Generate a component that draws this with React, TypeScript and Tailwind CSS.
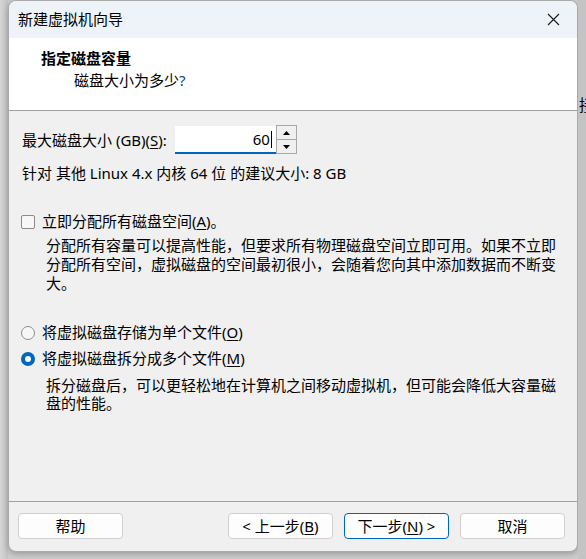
import React from "react";

const font = { fontFamily: '"Noto Sans", "Noto Sans CJK SC", sans-serif' };

function U({ children }: { children: React.ReactNode }) {
  return <span className="underline underline-offset-2 decoration-1">{children}</span>;
}

function Radio({ checked }: { checked?: boolean }) {
  if (checked) {
    return (
      <span className="w-[14px] h-[14px] rounded-full bg-[#0067c0] flex items-center justify-center shrink-0">
        <span className="w-[6px] h-[6px] rounded-full bg-white" />
      </span>
    );
  }
  return <span className="w-[14px] h-[14px] rounded-full border border-[#8c8c8c] bg-[#f7f7f7] shrink-0" />;
}

function Btn({ children, primary }: { children: React.ReactNode; primary?: boolean }) {
  return (
    <button
      className={
        primary
          ? "w-[105px] h-[26px] rounded-[4px] bg-[#fdfdfd] border border-[#0067c0] text-[15px] leading-none text-black flex items-center justify-center"
          : "w-[105px] h-[26px] rounded-[4px] bg-[#fdfdfd] border border-[#d0d0d0] text-[15px] leading-none text-black flex items-center justify-center"
      }
    >
      {children}
    </button>
  );
}

export default function App() {
  return (
    <div className="w-[586px] h-[559px] bg-[#cdcdcd] flex overflow-hidden text-black" style={font}>
      {/* left backdrop */}
      <div className="w-[8px] h-full bg-[linear-gradient(90deg,#d6d6d6,#c4c4c4)]" />

      {/* dialog */}
      <div className="w-[570px] h-[552px] flex flex-col rounded-[8px] border border-[#a9a9a9] overflow-hidden bg-[#f0f0f0] shadow-[0_2px_6px_rgba(0,0,0,0.25)]">
        {/* title bar */}
        <div className="h-[37px] bg-[#edf3f8] flex items-center justify-between pl-[9px] pr-[16px] shrink-0">
          <span className="text-[15px] leading-[19px]">新建虚拟机向导</span>
          <svg width="13" height="13" viewBox="0 0 13 13" className="mr-[1px]">
            <path d="M1 1 L12 12 M12 1 L1 12" stroke="#1a1a1a" strokeWidth="1.1" />
          </svg>
        </div>

        {/* header */}
        <div className="h-[73px] bg-white border-b border-[#a0a0a0] pl-[32px] pt-[10px] shrink-0">
          <div className="text-[15px] leading-[20px] font-bold">指定磁盘容量</div>
          <div className="text-[15px] leading-[19px] ml-[33px] mt-[3px]">
            磁盘大小为多少<span className="text-[#0f3e8a]">?</span>
          </div>
        </div>

        {/* body */}
        <div className="flex-1 pl-[12px] pr-[14px] text-[15px] leading-[19px]">
          <div className="flex items-center mt-[15px] h-[28px]">
            <span className="ml-[1px]">
              最大磁盘大小 (GB)(<U>S</U>):
            </span>
            <div className="ml-[8px] w-[101px] h-[28px] bg-white border-b-2 border-[#0067c0] flex items-center justify-end pr-[4px]">
              <span>60</span>
              <span className="w-[1px] h-[17px] bg-black ml-[1px]" />
            </div>
            <div className="w-[21px] h-[29px] -mt-[1px] border border-[#a8a8a8] bg-[#f0f0f0] flex flex-col">
              <div className="flex-1 flex items-center justify-center border-b border-[#a8a8a8]">
                <svg width="7" height="4" viewBox="0 0 7 4">
                  <path d="M0 4 L3.5 0 L7 4 Z" fill="#000" />
                </svg>
              </div>
              <div className="flex-1 flex items-center justify-center">
                <svg width="7" height="4" viewBox="0 0 7 4">
                  <path d="M0 0 L3.5 4 L7 0 Z" fill="#000" />
                </svg>
              </div>
            </div>
          </div>

          <div className="mt-[10px] ml-[1px]">针对 其他 Linux 4.x 内核 64 位 的建议大小: 8 GB</div>

          <div className="mt-[29px] flex items-center gap-[7px]">
            <span className="w-[14px] h-[14px] rounded-[2px] border border-[#8c8c8c] bg-[#f7f7f7] shrink-0" />
            <span>
              立即分配所有磁盘空间(<U>A</U>)。
            </span>
          </div>
          <p className="mt-[5px] ml-[25px]">
            分配所有容量可以提高性能，但要求所有物理磁盘空间立即可用。如果不立即分配所有空间，虚拟磁盘的空间最初很小，会随着您向其中添加数据而不断变大。
          </p>

          <div className="mt-[30px] flex items-center gap-[7px]">
            <Radio />
            <span>
              将虚拟磁盘存储为单个文件(<U>O</U>)
            </span>
          </div>
          <div className="mt-[7px] flex items-center gap-[7px]">
            <Radio checked />
            <span>
              将虚拟磁盘拆分成多个文件(<U>M</U>)
            </span>
          </div>
          <p className="mt-[8px] ml-[25px] leading-[18px]">
            拆分磁盘后，可以更轻松地在计算机之间移动虚拟机，但可能会降低大容量磁盘的性能。
          </p>
        </div>

        {/* footer */}
        <div className="h-[50px] border-t border-[#a0a0a0] flex items-start pt-[11px] pl-[9px] pr-[12px] shrink-0">
          <Btn>帮助</Btn>
          <div className="flex-1" />
          <div className="flex gap-[11px]">
            <Btn>
              &lt; 上一步(<U>B</U>)
            </Btn>
            <Btn primary>
              下一步(<U>N</U>) &gt;
            </Btn>
            <Btn>取消</Btn>
          </div>
        </div>
      </div>

      {/* right backdrop */}
      <div className="w-[8px] h-full bg-[#c4c4c4] overflow-hidden">
        <div className="pt-[96px] pl-[1px] text-[16px] leading-[18px] whitespace-nowrap">接</div>
      </div>
    </div>
  );
}
